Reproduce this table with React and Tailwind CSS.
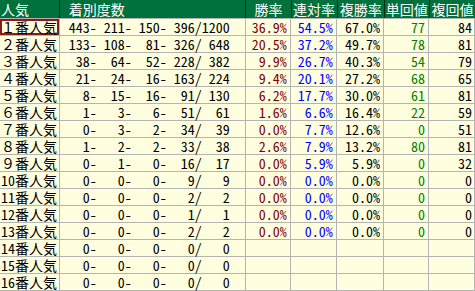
const rows = [
  ['１番人気', '443- 211- 150- 396/1200', '36.9%', '54.5%', '67.0%', '77', '84'],
  ['２番人気', '133- 108-  81- 326/ 648', '20.5%', '37.2%', '49.7%', '78', '81'],
  ['３番人気', ' 38-  64-  52- 228/ 382', '9.9%', '26.7%', '40.3%', '54', '79'],
  ['４番人気', ' 21-  24-  16- 163/ 224', '9.4%', '20.1%', '27.2%', '68', '65'],
  ['５番人気', '  8-  15-  16-  91/ 130', '6.2%', '17.7%', '30.0%', '61', '81'],
  ['６番人気', '  1-   3-   6-  51/  61', '1.6%', '6.6%', '16.4%', '22', '59'],
  ['７番人気', '  0-   3-   2-  34/  39', '0.0%', '7.7%', '12.6%', '0', '51'],
  ['８番人気', '  1-   2-   2-  33/  38', '2.6%', '7.9%', '13.2%', '80', '81'],
  ['９番人気', '  0-   1-   0-  16/  17', '0.0%', '5.9%', '5.9%', '0', '32'],
  ['10番人気', '  0-   0-   0-   9/   9', '0.0%', '0.0%', '0.0%', '0', '0'],
  ['11番人気', '  0-   0-   0-   2/   2', '0.0%', '0.0%', '0.0%', '0', '0'],
  ['12番人気', '  0-   0-   0-   1/   1', '0.0%', '0.0%', '0.0%', '0', '0'],
  ['13番人気', '  0-   0-   0-   2/   2', '0.0%', '0.0%', '0.0%', '0', '0'],
  ['14番人気', '  0-   0-   0-   0/   0', '', '', '', '', ''],
  ['15番人気', '  0-   0-   0-   0/   0', '', '', '', '', ''],
  ['16番人気', '  0-   0-   0-   0/   0', '', '', '', '', ''],
]

const cell = 'h-4 leading-4 border-r border-[#b4b4b4] box-content'

// full-width digits must stay full-width, ascii digits get the half-width feature
function Label({ text }) {
  const m = text.match(/^([0-9]+)(.*)$/)
  if (!m) return <span className="[font-feature-settings:normal]">{text}</span>
  return (
    <span className="[font-feature-settings:normal]">
      <span className="[font-feature-settings:'hwid']">{m[1]}</span>
      {m[2]}
    </span>
  )
}

export default function App() {
  return (
    <div className="w-[475px] h-[291px] bg-white overflow-hidden text-[14px] text-black font-['Noto_Sans_Mono_CJK_JP','Noto_Sans_CJK_JP',monospace] [font-feature-settings:'hwid']">
      <div className="flex h-[18px] bg-[#00703c] text-white leading-[18px]">
        <div className="w-[59px] pl-px border-r border-[#0a2a14] box-content">人気</div>
        <div className="w-[180px] pl-[9px] border-r border-[#0a2a14] box-content">着別度数</div>
        <div className="w-[45px] text-center border-r border-[#0a2a14] box-content">勝率</div>
        <div className="w-[46px] text-center border-r border-[#0a2a14] box-content">連対率</div>
        <div className="w-[47px] text-center border-r border-[#0a2a14] box-content">複勝率</div>
        <div className="w-[45px] text-center border-r border-[#0a2a14] box-content">単回値</div>
        <div className="w-[46px] text-center">複回値</div>
      </div>
      {rows.map((r, i) => (
        <div key={i} className={`flex bg-[#ffffe0] border-t border-[#b4b4b4] ${i === rows.length - 1 ? 'border-b' : ''}`}>
          <div className={`${cell} w-[59px] pl-px whitespace-nowrap ${i === 0 ? 'shadow-[inset_0_0_0_2px_#8b1a1a]' : ''}`}>
            <Label text={r[0]} />
          </div>
          <div className={`${cell} w-[180px] pl-[9px] whitespace-pre`}>{r[1]}</div>
          <div className={`${cell} w-[42px] pr-[3px] text-right text-[#800000]`}>{r[2]}</div>
          <div className={`${cell} w-[43px] pr-[3px] text-right text-[#0000ff]`}>{r[3]}</div>
          <div className={`${cell} w-[44px] pr-[3px] text-right`}>{r[4]}</div>
          <div className={`${cell} w-[42px] pr-[3px] text-right text-[#008000]`}>{r[5]}</div>
          <div className={`${cell} w-[44px] pr-[2px] text-right`}>{r[6]}</div>
        </div>
      ))}
    </div>
  )
}
